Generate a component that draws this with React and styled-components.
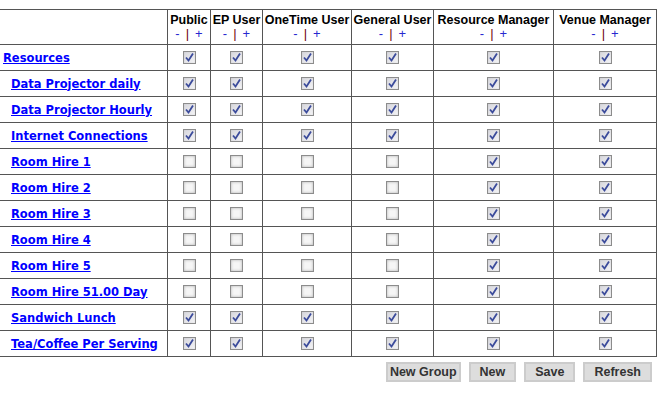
import styled, { createGlobalStyle } from "styled-components"

const GlobalStyle = createGlobalStyle`
    body {
        margin: 0;
        background: #ffffff;
        font-family: "Liberation Sans", Arial, sans-serif;
    }
`

const groups = [
    { name: "Public", width: 43 },
    { name: "EP User", width: 52 },
    { name: "OneTime User", width: 89 },
    { name: "General User", width: 82 },
    { name: "Resource Manager", width: 120 },
    { name: "Venue Manager", width: 103 },
]

const allOn = [true, true, true, true, true, true]
const managersOnly = [false, false, false, false, true, true]

const resources = [
    { name: "Resources", top: true, rights: allOn },
    { name: "Data Projector daily", rights: allOn },
    { name: "Data Projector Hourly", rights: allOn },
    { name: "Internet Connections", rights: allOn },
    { name: "Room Hire 1", rights: managersOnly },
    { name: "Room Hire 2", rights: managersOnly },
    { name: "Room Hire 3", rights: managersOnly },
    { name: "Room Hire 4", rights: managersOnly },
    { name: "Room Hire 5", rights: managersOnly },
    { name: "Room Hire 51.00 Day", rights: managersOnly },
    { name: "Sandwich Lunch", rights: allOn },
    { name: "Tea/Coffee Per Serving", rights: allOn },
]

function Tick({ checked }) {
    return (
        <Box $checked={checked}>
            {checked && (
                <svg width="11" height="11" viewBox="0 0 11 11">
                    <path d="M2 5.5 L4.5 8.5 L9 1.5" fill="none" stroke="#3b4b9b" strokeWidth="1.8" />
                </svg>
            )}
        </Box>
    )
}

export default function App() {
    return (
        <Page>
            <GlobalStyle />
            <Grid>
                <colgroup>
                    <col style={{ width: 168 }} />
                    {groups.map(g => <col key={g.name} style={{ width: g.width }} />)}
                </colgroup>
                <thead>
                    <tr>
                        <Corner />
                        {groups.map(g => (
                            <GroupHead key={g.name}>
                                {g.name}
                                <Toggles>
                                    <span>-</span>
                                    <Bar>|</Bar>
                                    <span>+</span>
                                </Toggles>
                            </GroupHead>
                        ))}
                    </tr>
                </thead>
                <tbody>
                    {resources.map(r => (
                        <Row key={r.name}>
                            <NameCell $top={r.top}>
                                <a href="#">{r.name}</a>
                            </NameCell>
                            {r.rights.map((on, i) => (
                                <TickCell key={i}><Tick checked={on} /></TickCell>
                            ))}
                        </Row>
                    ))}
                </tbody>
            </Grid>
            <Actions>
                <Button $tight>New Group</Button>
                <Button>New</Button>
                <Button>Save</Button>
                <Button>Refresh</Button>
            </Actions>
        </Page>
    )
}

const Page = styled.div`
    width: 664px;
    padding-top: 9px;
`
const Grid = styled.table`
    table-layout: fixed;
    width: 658px;
    margin-left: -1px;
    border-collapse: collapse;
    td, th {
        border: 1px solid #555555;
        padding: 0;
    }
`
const Corner = styled.th``
const GroupHead = styled.th`
    height: 34px;
    font-family: "Liberation Sans", Tahoma, sans-serif;
    font-size: 12.5px;
    font-weight: bold;
    color: #000000;
    text-align: center;
    vertical-align: middle;
    line-height: 14px;
    white-space: nowrap;
`
const Toggles = styled.div`
    display: flex;
    justify-content: center;
    gap: 6px;
    font-weight: normal;
    font-size: 13px;
    span { color: #2828d0; }
`
const Bar = styled.b`
    font-weight: normal;
    color: #700010;
`
const Row = styled.tr`
    height: 26px;
`
const NameCell = styled.td`
    padding-left: ${p => (p.$top ? "3px" : "11px")} !important;
    font-family: "DejaVu Sans", Verdana, sans-serif;
    font-size: 11.5px;
    font-weight: bold;
    white-space: nowrap;
    a {
        color: #0000ff;
        text-decoration: underline;
    }
`
const TickCell = styled.td`
    text-align: center;
    vertical-align: middle;
    line-height: 0;
`
const Box = styled.span`
    display: inline-block;
    box-sizing: border-box;
    width: 13px;
    height: 13px;
    border: 1px solid #8c8c8c;
    background: ${p => (p.$checked ? "linear-gradient(135deg, #d6d6dc, #f4f4f6)" : "#f6f6f6")};
    box-shadow: ${p => (p.$checked ? "inset 0 0 1px #b8b8b8" : "inset 0 0 3px #b0b0b0")};
    vertical-align: middle;
    svg { display: block; }
`
const Actions = styled.div`
    display: flex;
    justify-content: flex-end;
    gap: 8px;
    width: 656px;
    margin-top: 5px;
    padding-right: 4px;
    box-sizing: border-box;
`
const Button = styled.button`
    height: 20px;
    padding: ${p => (p.$tight ? "0 2px" : "0 9px")};
    border: 2px solid #cccccc;
    background: #dddddd;
    font-family: "Liberation Sans", Tahoma, sans-serif;
    font-size: 12.5px;
    font-weight: bold;
    color: #333333;
    line-height: 14px;
`
